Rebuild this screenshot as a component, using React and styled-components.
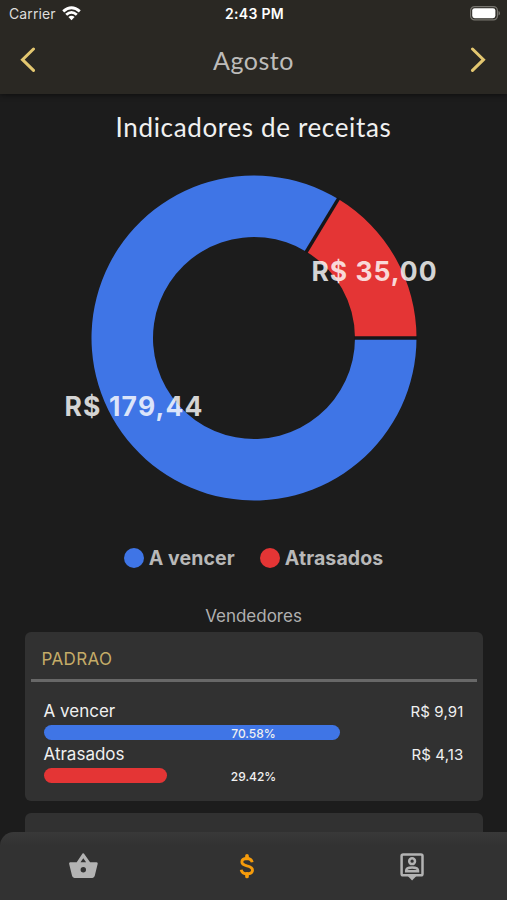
import React, { useState } from "react";
import styled, { createGlobalStyle } from "styled-components";

const BLUE = "#3f75e6";
const RED = "#e43535";

const receitas = [
  { label: "Atrasados", value: 35.0, text: "R$ 35,00", color: RED, x: 374, y: 121, w: 125 },
  { label: "A vencer", value: 179.44, text: "R$ 179,44", color: BLUE, x: 133.5, y: 256, w: 138 },
];

const vendedores = [
  {
    name: "PADRAO",
    rows: [
      { label: "A vencer", value: "R$ 9,91", percent: 70.58, color: BLUE },
      { label: "Atrasados", value: "R$ 4,13", percent: 29.42, color: RED },
    ],
  },
  { name: "VENDEDOR", rows: [] },
];

const CX = 254;
const CY = 178;
const OUTER = 162.5;
const INNER = 101;

const point = (angle, r) => {
  const rad = (angle * Math.PI) / 180;
  return `${CX + r * Math.cos(rad)} ${CY - r * Math.sin(rad)}`;
};

const slicePath = (from, to) => {
  const large = to - from > 180 ? 1 : 0;
  return [
    `M ${point(from, OUTER)}`,
    `A ${OUTER} ${OUTER} 0 ${large} 0 ${point(to, OUTER)}`,
    `L ${point(to, INNER)}`,
    `A ${INNER} ${INNER} 0 ${large} 1 ${point(from, INNER)}`,
    "Z",
  ].join(" ");
};

const Donut = () => {
  const total = receitas.reduce((sum, item) => sum + item.value, 0);
  const split = (receitas[0].value / total) * 360;

  return (
    <Chart viewBox="0 0 507 360">
      <path d={slicePath(0, split)} fill={receitas[0].color} />
      <path d={slicePath(split, 360)} fill={receitas[1].color} />
      {[0, split].map((angle) => (
        <path
          key={angle}
          d={`M ${point(angle, INNER - 1)} L ${point(angle, OUTER + 1)}`}
          stroke="#161619"
          strokeWidth="3.4"
        />
      ))}
      {receitas.map((item) => (
        <ChartLabel key={item.label} x={item.x} y={item.y} textLength={item.w}>
          {item.text}
        </ChartLabel>
      ))}
    </Chart>
  );
};

const Battery = () => (
  <svg width="30" height="15" viewBox="0 0 30 15">
    <rect x="0.6" y="0.6" width="26.8" height="13.3" rx="4" fill="none" stroke="#77756f" strokeWidth="1.2" />
    <rect x="2.2" y="2.2" width="23.2" height="10" rx="2.4" fill="#fff" />
    <path d="M28.5 5 Q30 5.6 30 7.3 Q30 9 28.5 9.6 Z" fill="#77756f" />
  </svg>
);

const Wifi = () => (
  <svg width="19" height="15" viewBox="0 0 19 15" fill="none" stroke="#fff" strokeWidth="2.8">
    <path d="M1.2 5.4 Q9.5 -2 17.8 5.4" />
    <path d="M4.2 8.8 Q9.5 4 14.8 8.8" />
    <path d="M6.4 11 Q9.5 8.6 12.6 11 L9.5 14.2 Z" fill="#fff" stroke="none" />
  </svg>
);

const BasketIcon = () => (
  <svg width="48" height="48" viewBox="0 0 48 48" fill="currentColor">
    <path
      fillRule="evenodd"
      d="M24.9 13.6 L31.1 22.2 H37.5 Q39.1 22.2 38.7 23.8 L35.7 36.1 Q35.2 37.9 33.4 37.9 H15.4 Q13.6 37.9 13.1 36.1 L10.1 23.8 Q9.7 22.2 11.3 22.2 H17.7 L23.5 13.6 Q24.2 12.7 24.9 13.6 Z M24.3 18.2 L21.5 22.2 H27.1 Z M24.3 27.1 A2.7 2.7 0 1 0 24.3 32.5 A2.7 2.7 0 1 0 24.3 27.1 Z"
    />
  </svg>
);

const MoneyIcon = () => (
  <svg width="48" height="48" viewBox="0 0 48 48" fill="none" stroke="currentColor" strokeWidth="2.9">
    <path d="M28.2 22.3 C27.6 19.6 25.7 18.5 23 18.5 C19.8 18.5 17.9 19.9 17.9 21.9 C17.9 24.2 20 25 23 25.8 C26.3 26.6 28.5 27.7 28.5 30.2 C28.5 32.4 26.3 33.8 23 33.8 C19.8 33.8 17.7 32.4 17.2 29.7" />
    <path d="M23 15.8 V18.5 M23 33.8 V36.5" strokeWidth="3.7" strokeLinecap="round" />
  </svg>
);

const PersonPinIcon = () => (
  <svg width="48" height="48" viewBox="0 0 48 48" fill="none" stroke="currentColor" strokeWidth="2.5">
    <rect x="13.6" y="14.4" width="20.9" height="20.9" rx="1.6" />
    <path d="M19.8 36 H28.4 L24.1 40.5 Z" fill="currentColor" stroke="none" />
    <circle cx="24.1" cy="21.2" r="2.9" />
    <path d="M18.2 31.3 V30.5 C18.2 28.5 21.2 27.5 24.1 27.5 C27 27.5 30 28.5 30 30.5 V31.3 Z" />
  </svg>
);

const tabs = [
  { id: "vendas", icon: BasketIcon },
  { id: "receitas", icon: MoneyIcon },
  { id: "clientes", icon: PersonPinIcon },
];

const App = () => {
  const [activeTab, setActiveTab] = useState("receitas");

  return (
    <>
      <GlobalStyle />
      <Screen>
        <Header>
          <StatusBar>
            <Carrier>
              Carrier
              <Wifi />
            </Carrier>
            <Clock>2:43 PM</Clock>
            <Battery />
          </StatusBar>
          <MonthBar>
            <ArrowButton>
              <svg width="16" height="26" viewBox="0 0 16 26">
                <path d="M13.5 2 L2.5 12.7 L13.5 23.4" />
              </svg>
            </ArrowButton>
            <Month>Agosto</Month>
            <ArrowButton>
              <svg width="16" height="26" viewBox="0 0 16 26">
                <path d="M2.5 2 L13.5 12.7 L2.5 23.4" />
              </svg>
            </ArrowButton>
          </MonthBar>
        </Header>

        <Content>
          <Title>Indicadores de receitas</Title>
          <Donut />
          <Legend>
            <LegendItem>
              <Dot $color={BLUE} />
              A vencer
            </LegendItem>
            <LegendItem>
              <Dot $color={RED} />
              Atrasados
            </LegendItem>
          </Legend>
          <Subtitle>Vendedores</Subtitle>
          {vendedores.map((vendedor) => (
            <Card key={vendedor.name}>
              {vendedor.rows.length > 0 && (
                <>
                  <CardTitle>{vendedor.name}</CardTitle>
                  <Rows>
                    {vendedor.rows.map((row) => (
                      <div key={row.label}>
                        <RowHead>
                          <span>{row.label}</span>
                          <Amount>{row.value}</Amount>
                        </RowHead>
                        <Track>
                          <Fill $color={row.color} style={{ width: `${row.percent}%` }} />
                          <Percent>{row.percent}%</Percent>
                        </Track>
                      </div>
                    ))}
                  </Rows>
                </>
              )}
            </Card>
          ))}
        </Content>

        <TabBar>
          {tabs.map(({ id, icon: Icon }) => (
            <TabButton
              key={id}
              $active={activeTab === id}
              onClick={() => setActiveTab(id)}
            >
              <Icon />
            </TabButton>
          ))}
        </TabBar>
      </Screen>
    </>
  );
};

const GlobalStyle = createGlobalStyle`
  * {
    box-sizing: border-box;
  }

  body {
    margin: 0;
    background: #1c1c1c;
    overflow: hidden;
  }

  button {
    padding: 0;
    border: none;
    background: none;
  }
`;

const Screen = styled.div`
  display: flex;
  flex-direction: column;
  height: 900px;
  overflow: hidden;
  background: #1c1c1c;
  color: #f0f0f0;
  font-family: Inter, "Liberation Sans", sans-serif;
`;

const Header = styled.header`
  flex: none;
  height: 94px;
  background: #2a2823;
  box-shadow: 0 1px 5px rgba(0, 0, 0, 0.5);
`;

const StatusBar = styled.div`
  display: grid;
  grid-template-columns: 1fr auto 1fr;
  align-items: center;
  height: 27px;
  padding: 0 7px 0 9px;

  > svg {
    justify-self: end;
  }
`;

const Carrier = styled.div`
  display: flex;
  align-items: center;
  gap: 6px;
  font-size: 14px;
  letter-spacing: 0.1px;
  color: #dedddb;
`;

const Clock = styled.div`
  font-size: 14px;
  font-weight: 600;
  letter-spacing: 0.3px;
  color: #fff;
`;

const MonthBar = styled.div`
  display: flex;
  align-items: center;
  justify-content: space-between;
  height: 66px;
  padding: 0 21px 0 20px;
`;

const ArrowButton = styled.button`
  display: flex;

  path {
    fill: none;
    stroke: #e3c770;
    stroke-width: 3;
    stroke-linecap: round;
  }
`;

const Month = styled.div`
  padding-left: 1px;
  font-family: Lato, sans-serif;
  font-size: 25px;
  letter-spacing: 0.5px;
  color: #bdbcba;
`;

const Content = styled.main`
  display: flex;
  flex-direction: column;
  flex: 1;
  min-height: 0;
  overflow: hidden;
`;

const Title = styled.h1`
  flex: none;
  height: 66px;
  margin: 0;
  font-family: Lato, sans-serif;
  font-size: 26px;
  font-weight: 400;
  line-height: 66px;
  letter-spacing: 0.65px;
  text-align: center;
`;

const Chart = styled.svg`
  flex: none;
  width: 507px;
  height: 360px;
`;

const ChartLabel = styled.text`
  fill: #fff;
  fill-opacity: 0.82;
  font-size: 26.5px;
  font-weight: 700;
  text-anchor: middle;
`;

const Legend = styled.div`
  display: flex;
  flex: none;
  justify-content: center;
  gap: 25px;
  height: 76px;
  padding-top: 25.5px;
`;

const LegendItem = styled.div`
  display: flex;
  align-items: center;
  gap: 5px;
  height: 24px;
  font-size: 19.5px;
  font-weight: 700;
  letter-spacing: 0.1px;
  color: #b8b8b8;
`;

const Dot = styled.span`
  width: 20px;
  height: 20px;
  border-radius: 50%;
  background: ${({ $color }) => $color};
`;

const Subtitle = styled.h2`
  flex: none;
  height: 36px;
  margin: 0;
  font-size: 17px;
  font-weight: 400;
  line-height: 40px;
  text-align: center;
  color: #b0b0b0;
`;

const Card = styled.section`
  flex: none;
  height: 169px;
  margin: 0 24.5px 12px;
  padding: 0 6px;
  border-radius: 6px;
  background: #313131;
`;

const CardTitle = styled.div`
  height: 50px;
  padding-left: 11px;
  border-bottom: 3px solid #686868;
  font-size: 17px;
  line-height: 54px;
  letter-spacing: 0.35px;
  color: #c5ac68;
`;

const Rows = styled.div`
  padding: 16px 13px 0;
`;

const RowHead = styled.div`
  display: flex;
  align-items: center;
  justify-content: space-between;
  height: 26px;
  font-size: 17px;
`;

const Amount = styled.span`
  font-size: 15px;
  letter-spacing: 0.15px;
`;

const Track = styled.div`
  position: relative;
  height: 15px;
  margin: 1px 0;
`;

const Fill = styled.div`
  height: 100%;
  border-radius: 8px;
  background: ${({ $color }) => $color};
`;

const Percent = styled.span`
  position: absolute;
  inset: 0;
  font-size: 12px;
  font-weight: 500;
  line-height: 17px;
  text-align: center;
`;

const TabBar = styled.nav`
  z-index: 1;
  display: grid;
  grid-template-columns: repeat(3, 164.5px);
  flex: none;
  height: 68px;
  padding-left: 1px;
  border-radius: 14px 0 0 0;
  background: linear-gradient(#393939, #323232 14px);
`;

const TabButton = styled.button`
  display: flex;
  align-items: center;
  justify-content: center;
  padding-bottom: 4px;
  color: ${({ $active }) => ($active ? "#f59b0b" : "#b3b3b3")};
`;

export default App;
